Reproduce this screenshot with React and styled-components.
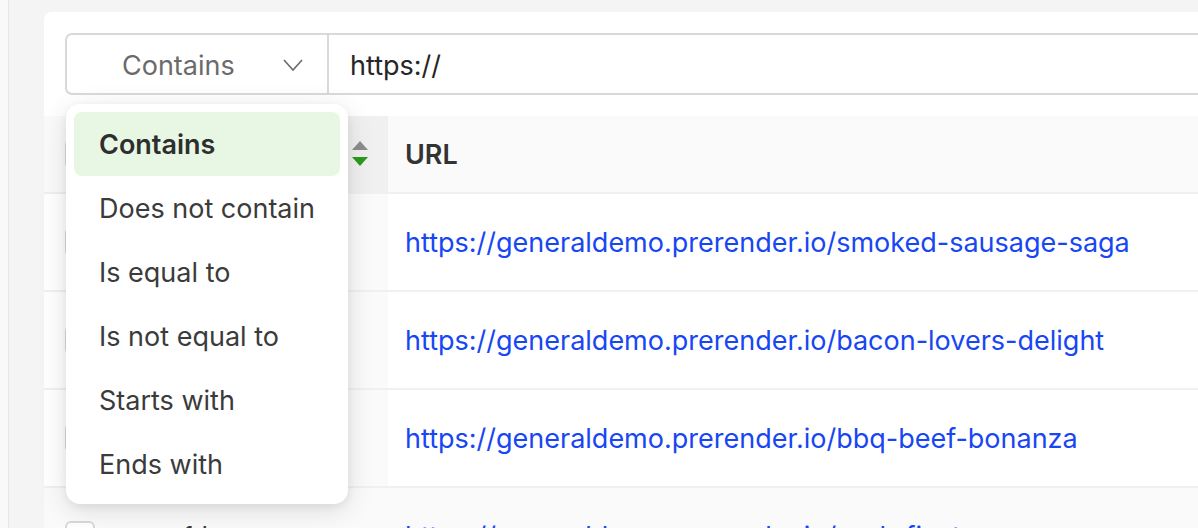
import React from "react";
import styled, { createGlobalStyle } from "styled-components";

const GlobalStyle = createGlobalStyle`
  html, body {
    margin: 0;
    padding: 0;
    background: #f4f4f4;
    overflow: hidden;
    font-family: Inter, "Open Sans", sans-serif;
  }
  * { box-sizing: border-box; }
`;

const Shell = styled.div`
  display: flex;
  width: 1198px;
  height: 528px;
  overflow: hidden;
`;

const SideStrip = styled.div`
  width: 9px;
  flex: none;
  background: #f9f9f9;
  border-right: 1px solid #e6e6e6;
`;

const Main = styled.div`
  flex: 1;
  padding: 12px 0 0 35px;
  min-width: 0;
`;

const Card = styled.div`
  width: 1300px;
  height: 600px;
  background: #fff;
  border-radius: 8px 0 0 0;
  padding-top: 21px;
`;

const FilterWrap = styled.div`
  position: relative;
  margin-left: 21px;
`;

const FilterBar = styled.div`
  display: flex;
  height: 62px;
  border: 2px solid #d9d9d9;
  border-radius: 7px;
`;

const SelectBox = styled.div`
  width: 262px;
  flex: none;
  display: flex;
  align-items: center;
  justify-content: space-between;
  padding: 2px 24px 0 55px;
  border-right: 2px solid #d9d9d9;
  color: #6b6b6b;
  font-size: 27px;
`;

const InputText = styled.div`
  display: flex;
  align-items: center;
  padding: 2px 0 0 21px;
  color: #262626;
  font-size: 27px;
`;

const Menu = styled.div`
  position: absolute;
  top: 71px;
  left: 1px;
  width: 282px;
  padding: 8px;
  background: #fff;
  border-radius: 14px;
  box-shadow: 0 6px 28px rgba(0, 0, 0, 0.12), 0 3px 8px rgba(0, 0, 0, 0.06);
  z-index: 5;
`;

const MenuItem = styled.div`
  height: 64px;
  display: flex;
  align-items: center;
  padding-left: 25px;
  border-radius: 8px;
  font-size: 27px;
  color: ${p => (p.$active ? "#2e2e2e" : "#3b3b3b")};
  font-weight: ${p => (p.$active ? 600 : 400)};
  background: ${p => (p.$active ? "#e7f7e4" : "transparent")};
`;

const Table = styled.div`
  margin-top: 21px;
`;

const Row = styled.div`
  display: grid;
  grid-template-columns: 122px 222px 1fr;
  height: ${p => (p.$head ? "78px" : "98px")};
  border-bottom: 2px solid #f0f0f0;
  background: ${p => (p.$head || p.$shade ? "#fafafa" : "#fff")};
`;

const Cell = styled.div`
  display: flex;
  align-items: center;
  padding-left: ${p => p.$pad || "17px"};
  justify-content: ${p => (p.$sort ? "flex-end" : "flex-start")};
  padding-right: ${p => (p.$sort ? "20px" : "0")};
  background: ${p => p.$bg || "transparent"};
  font-size: 27px;
  color: #3a3a3a;
`;

const HeadLabel = styled.span`
  font-weight: 600;
  color: #333;
`;

const Link = styled.a`
  color: #1746f2;
  text-decoration: none;
  white-space: nowrap;
`;

const Checkbox = styled.span`
  width: 30px;
  height: 30px;
  border: 2px solid #d9d9d9;
  border-radius: 6px;
  background: #fff;
`;

const Chevron = () => (
  <svg width="20" height="14" viewBox="0 0 20 14">
    <polyline points="1,2 10,12 19,2" fill="none" stroke="#6b6b6b" strokeWidth="1.6" />
  </svg>
);

const SortIcon = () => (
  <svg width="16" height="26" viewBox="0 0 16 26">
    <polygon points="0,9 8,0 16,9" fill="#8c8c8c" />
    <polygon points="0,16 16,16 8,25" fill="#2b9a1e" />
  </svg>
);

const options = ["Contains", "Does not contain", "Is equal to", "Is not equal to", "Starts with", "Ends with"];

const rows = [
  { age: "2 hours ago", url: "https://generaldemo.prerender.io/smoked-sausage-saga" },
  { age: "3 hours ago", url: "https://generaldemo.prerender.io/bacon-lovers-delight" },
  { age: "5 hours ago", url: "https://generaldemo.prerender.io/bbq-beef-bonanza" },
  { age: "1 hour ago", url: "https://generaldemo.prerender.io/pork-fiesta", shade: true },
];

export default function App() {
  return (
    <>
      <GlobalStyle />
      <Shell>
        <SideStrip />
        <Main>
          <Card>
            <FilterWrap>
              <FilterBar>
                <SelectBox>
                  <span>Contains</span>
                  <Chevron />
                </SelectBox>
                <InputText>https://</InputText>
              </FilterBar>
              <Menu>
                {options.map((o, i) => (
                  <MenuItem key={o} $active={i === 0}>{o}</MenuItem>
                ))}
              </Menu>
            </FilterWrap>
            <Table>
              <Row $head>
                <Cell $pad="21px"><Checkbox /></Cell>
                <Cell $sort $bg="#f0f0f0"><SortIcon /></Cell>
                <Cell><HeadLabel>URL</HeadLabel></Cell>
              </Row>
              {rows.map(r => (
                <Row key={r.url} $shade={r.shade}>
                  <Cell $pad="21px"><Checkbox /></Cell>
                  <Cell $bg="#fafafa">{r.age}</Cell>
                  <Cell><Link href="#">{r.url}</Link></Cell>
                </Row>
              ))}
            </Table>
          </Card>
        </Main>
      </Shell>
    </>
  );
}
